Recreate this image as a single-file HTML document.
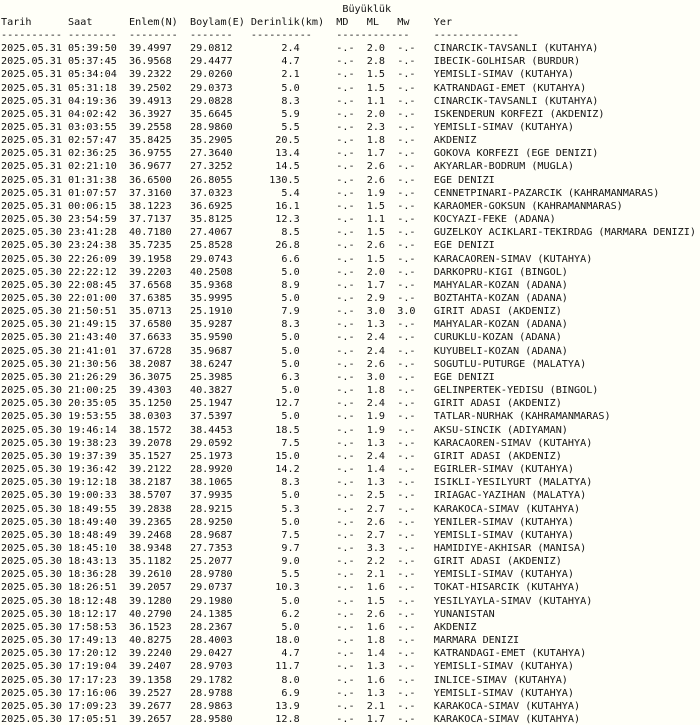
<!DOCTYPE html>
<html><head><meta charset="utf-8"><style>
html,body{margin:0;padding:0;background:#fffff8;width:700px;height:725px;overflow:hidden}
pre{margin:-10.6px 0 0 1px;font-family:"DejaVu Sans Mono","Liberation Mono",monospace;font-size:10.13px;line-height:13.16px;color:#111;white-space:pre}
</style></head><body><pre>

                                                        Büyüklük
Tarih      Saat      Enlem(N)  Boylam(E) Derinlik(km)  MD   ML   Mw    Yer
---------- --------  --------  -------   ----------    ------------    --------------
2025.05.31 05:39:50  39.4997   29.0812        2.4      -.-  2.0  -.-   CINARCIK-TAVSANLI (KUTAHYA)
2025.05.31 05:37:45  36.9568   29.4477        4.7      -.-  2.8  -.-   IBECIK-GOLHISAR (BURDUR)
2025.05.31 05:34:04  39.2322   29.0260        2.1      -.-  1.5  -.-   YEMISLI-SIMAV (KUTAHYA)
2025.05.31 05:31:18  39.2502   29.0373        5.0      -.-  1.5  -.-   KATRANDAGI-EMET (KUTAHYA)
2025.05.31 04:19:36  39.4913   29.0828        8.3      -.-  1.1  -.-   CINARCIK-TAVSANLI (KUTAHYA)
2025.05.31 04:02:42  36.3927   35.6645        5.9      -.-  2.0  -.-   ISKENDERUN KORFEZI (AKDENIZ)
2025.05.31 03:03:55  39.2558   28.9860        5.5      -.-  2.3  -.-   YEMISLI-SIMAV (KUTAHYA)
2025.05.31 02:57:47  35.8425   35.2905       20.5      -.-  1.8  -.-   AKDENIZ
2025.05.31 02:36:25  36.9755   27.3640       13.4      -.-  1.7  -.-   GOKOVA KORFEZI (EGE DENIZI)
2025.05.31 02:21:10  36.9677   27.3252       14.5      -.-  2.6  -.-   AKYARLAR-BODRUM (MUGLA)
2025.05.31 01:31:38  36.6500   26.8055      130.5      -.-  2.6  -.-   EGE DENIZI
2025.05.31 01:07:57  37.3160   37.0323        5.4      -.-  1.9  -.-   CENNETPINARI-PAZARCIK (KAHRAMANMARAS)
2025.05.31 00:06:15  38.1223   36.6925       16.1      -.-  1.5  -.-   KARAOMER-GOKSUN (KAHRAMANMARAS)
2025.05.30 23:54:59  37.7137   35.8125       12.3      -.-  1.1  -.-   KOCYAZI-FEKE (ADANA)
2025.05.30 23:41:28  40.7180   27.4067        8.5      -.-  1.5  -.-   GUZELKOY ACIKLARI-TEKIRDAG (MARMARA DENIZI)
2025.05.30 23:24:38  35.7235   25.8528       26.8      -.-  2.6  -.-   EGE DENIZI
2025.05.30 22:26:09  39.1958   29.0743        6.6      -.-  1.5  -.-   KARACAOREN-SIMAV (KUTAHYA)
2025.05.30 22:22:12  39.2203   40.2508        5.0      -.-  2.0  -.-   DARKOPRU-KIGI (BINGOL)
2025.05.30 22:08:45  37.6568   35.9368        8.9      -.-  1.7  -.-   MAHYALAR-KOZAN (ADANA)
2025.05.30 22:01:00  37.6385   35.9995        5.0      -.-  2.9  -.-   BOZTAHTA-KOZAN (ADANA)
2025.05.30 21:50:51  35.0713   25.1910        7.9      -.-  3.0  3.0   GIRIT ADASI (AKDENIZ)
2025.05.30 21:49:15  37.6580   35.9287        8.3      -.-  1.3  -.-   MAHYALAR-KOZAN (ADANA)
2025.05.30 21:43:40  37.6633   35.9590        5.0      -.-  2.4  -.-   CURUKLU-KOZAN (ADANA)
2025.05.30 21:41:01  37.6728   35.9687        5.0      -.-  2.4  -.-   KUYUBELI-KOZAN (ADANA)
2025.05.30 21:30:56  38.2087   38.6247        5.0      -.-  2.6  -.-   SOGUTLU-PUTURGE (MALATYA)
2025.05.30 21:26:29  36.3075   25.3985        6.3      -.-  3.0  -.-   EGE DENIZI
2025.05.30 21:00:25  39.4303   40.3827        5.0      -.-  1.8  -.-   GELINPERTEK-YEDISU (BINGOL)
2025.05.30 20:35:05  35.1250   25.1947       12.7      -.-  2.4  -.-   GIRIT ADASI (AKDENIZ)
2025.05.30 19:53:55  38.0303   37.5397        5.0      -.-  1.9  -.-   TATLAR-NURHAK (KAHRAMANMARAS)
2025.05.30 19:46:14  38.1572   38.4453       18.5      -.-  1.9  -.-   AKSU-SINCIK (ADIYAMAN)
2025.05.30 19:38:23  39.2078   29.0592        7.5      -.-  1.3  -.-   KARACAOREN-SIMAV (KUTAHYA)
2025.05.30 19:37:39  35.1527   25.1973       15.0      -.-  2.4  -.-   GIRIT ADASI (AKDENIZ)
2025.05.30 19:36:42  39.2122   28.9920       14.2      -.-  1.4  -.-   EGIRLER-SIMAV (KUTAHYA)
2025.05.30 19:12:18  38.2187   38.1065        8.3      -.-  1.3  -.-   ISIKLI-YESILYURT (MALATYA)
2025.05.30 19:00:33  38.5707   37.9935        5.0      -.-  2.5  -.-   IRIAGAC-YAZIHAN (MALATYA)
2025.05.30 18:49:55  39.2838   28.9215        5.3      -.-  2.7  -.-   KARAKOCA-SIMAV (KUTAHYA)
2025.05.30 18:49:40  39.2365   28.9250        5.0      -.-  2.6  -.-   YENILER-SIMAV (KUTAHYA)
2025.05.30 18:48:49  39.2468   28.9687        7.5      -.-  2.7  -.-   YEMISLI-SIMAV (KUTAHYA)
2025.05.30 18:45:10  38.9348   27.7353        9.7      -.-  3.3  -.-   HAMIDIYE-AKHISAR (MANISA)
2025.05.30 18:43:13  35.1182   25.2077        9.0      -.-  2.2  -.-   GIRIT ADASI (AKDENIZ)
2025.05.30 18:36:28  39.2610   28.9780        5.5      -.-  2.1  -.-   YEMISLI-SIMAV (KUTAHYA)
2025.05.30 18:26:51  39.2057   29.0737       10.3      -.-  1.6  -.-   TOKAT-HISARCIK (KUTAHYA)
2025.05.30 18:12:48  39.1280   29.1980        5.0      -.-  1.5  -.-   YESILYAYLA-SIMAV (KUTAHYA)
2025.05.30 18:12:17  40.2790   24.1385        6.2      -.-  2.6  -.-   YUNANISTAN
2025.05.30 17:58:53  36.1523   28.2367        5.0      -.-  1.6  -.-   AKDENIZ
2025.05.30 17:49:13  40.8275   28.4003       18.0      -.-  1.8  -.-   MARMARA DENIZI
2025.05.30 17:20:12  39.2240   29.0427        4.7      -.-  1.4  -.-   KATRANDAGI-EMET (KUTAHYA)
2025.05.30 17:19:04  39.2407   28.9703       11.7      -.-  1.3  -.-   YEMISLI-SIMAV (KUTAHYA)
2025.05.30 17:17:23  39.1358   29.1782        8.0      -.-  1.6  -.-   INLICE-SIMAV (KUTAHYA)
2025.05.30 17:16:06  39.2527   28.9788        6.9      -.-  1.3  -.-   YEMISLI-SIMAV (KUTAHYA)
2025.05.30 17:09:23  39.2677   28.9863       13.9      -.-  2.1  -.-   KARAKOCA-SIMAV (KUTAHYA)
2025.05.30 17:05:51  39.2657   28.9580       12.8      -.-  1.7  -.-   KARAKOCA-SIMAV (KUTAHYA)
</pre></body></html>
